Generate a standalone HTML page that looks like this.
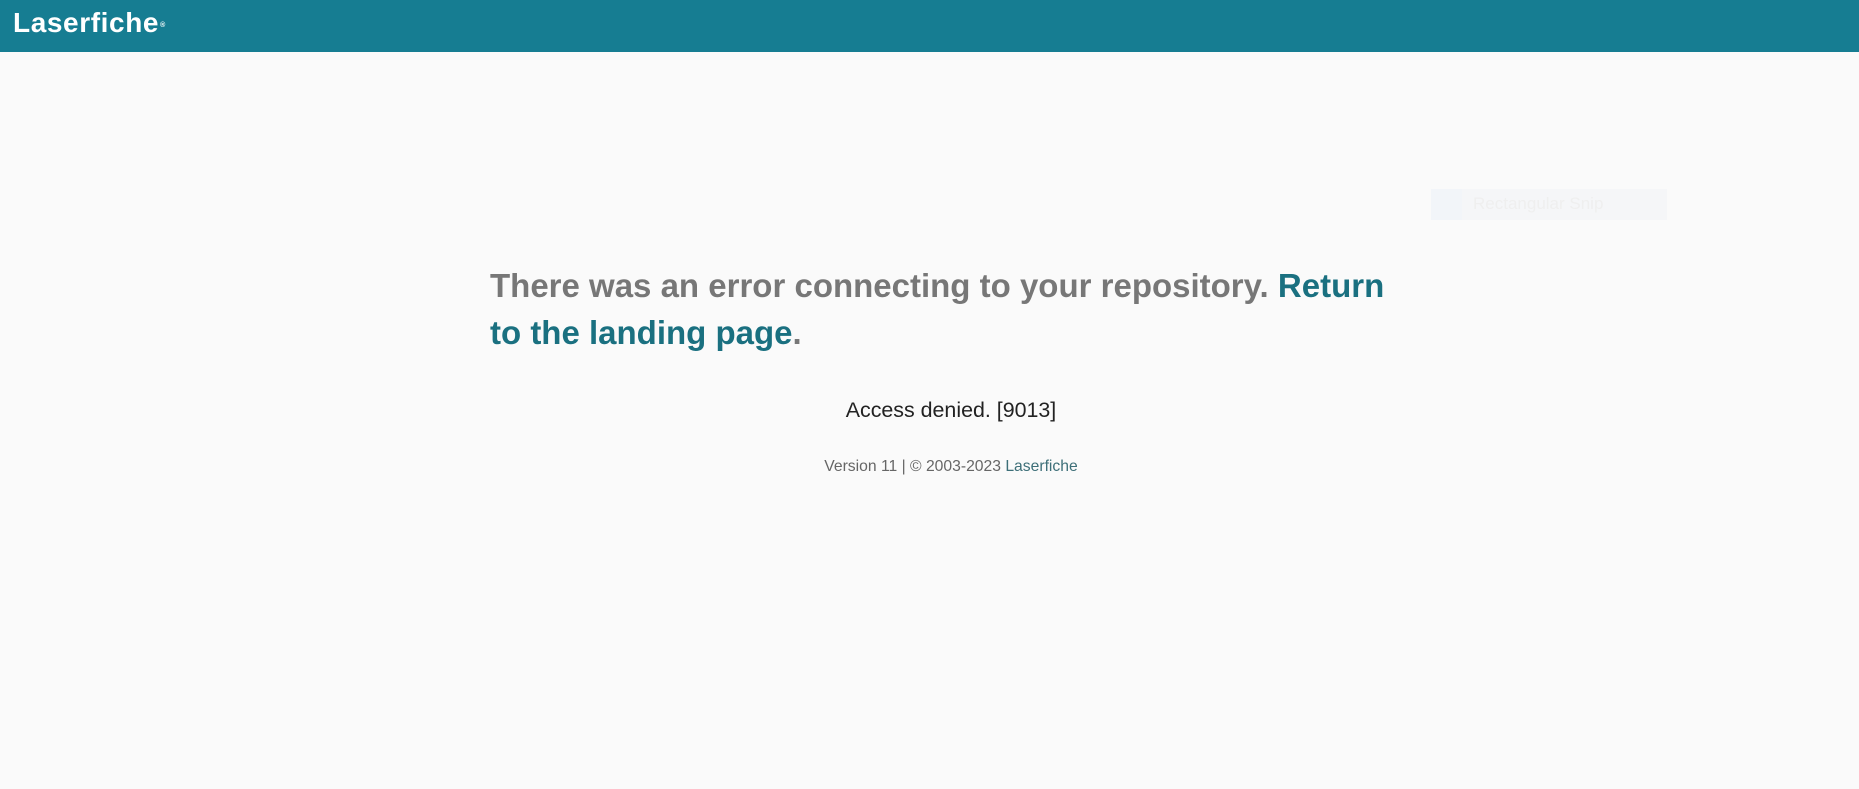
<!DOCTYPE html>
<html><head><meta charset="utf-8"><style>
html,body{margin:0;padding:0;width:1859px;height:789px;background:#fafafa;overflow:hidden;font-family:"Liberation Sans",sans-serif;position:relative}
.hdr{position:absolute;left:0;top:0;width:1859px;height:52px;background:#167d92}
.logo{position:absolute;left:13px;top:7px;color:#fff;font-weight:bold;font-size:28px;letter-spacing:0.6px;line-height:32px}
.logo sup{font-size:7px;vertical-align:top;position:relative;top:3px;margin-left:1px;letter-spacing:0}
.h{position:absolute;left:490px;top:262px;width:1000px;font-size:33px;line-height:47px;color:#777;font-weight:bold;letter-spacing:0}
.h span{color:#1a7080}
.ad{position:absolute;left:0;width:1902px;text-align:center;top:398px;font-size:21.4px;color:#222}
.ver{position:absolute;left:0;width:1902px;text-align:center;top:458px;font-size:15.7px;color:#666}
.ver span{color:#3d6f78}
.snip{position:absolute;left:1431px;top:189px;width:236px;height:31px;background:#f5f6f8}
.snip i{position:absolute;left:0;top:0;width:31px;height:31px;background:#f2f5f9}
.snip em{position:absolute;left:42px;top:5px;font-style:normal;font-size:17px;color:#efefef}
</style></head><body>
<div class="hdr"><div class="logo">Laserfiche<sup>®</sup></div></div>
<div class="snip"><i></i><em>Rectangular Snip</em></div>
<div class="h">There was an error connecting to your repository. <span>Return</span><br><span>to the landing page</span>.</div>
<div class="ad">Access denied. [9013]</div>
<div class="ver">Version 11 | © 2003-2023 <span>Laserfiche</span></div>
</body></html>
